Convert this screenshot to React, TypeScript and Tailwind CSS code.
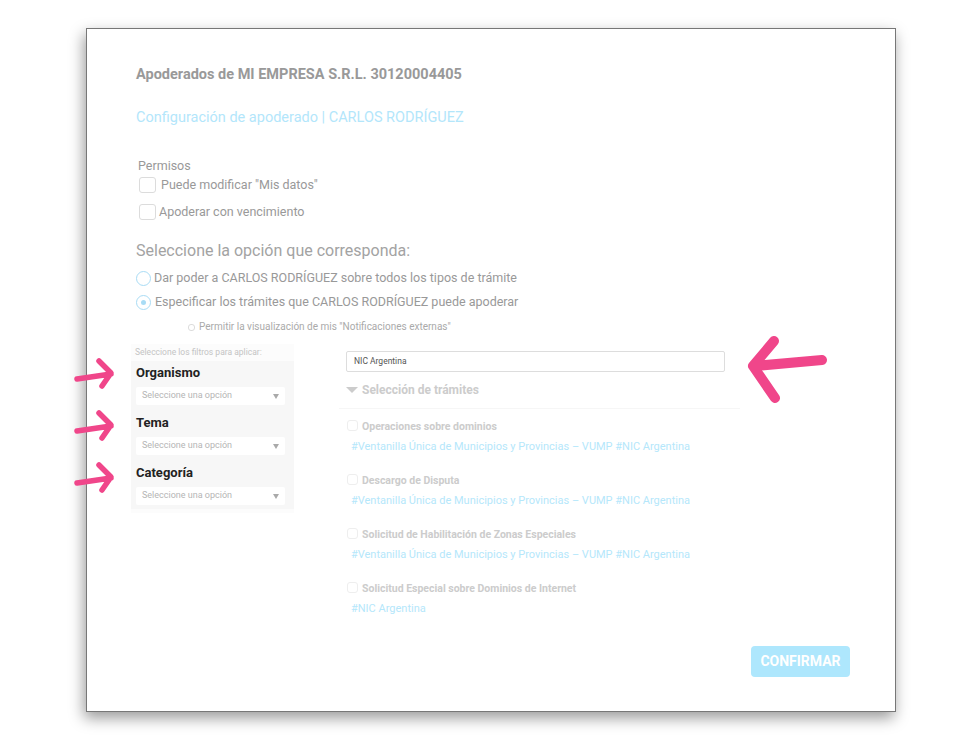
const font = "font-['Roboto',sans-serif]";

const filters = ["Organismo", "Tema", "Categoría"];

const tramites = [
  { title: "Operaciones sobre dominios", tags: "#Ventanilla Única de Municipios y Provincias – VUMP #NIC Argentina" },
  { title: "Descargo de Disputa", tags: "#Ventanilla Única de Municipios y Provincias – VUMP #NIC Argentina" },
  { title: "Solicitud de Habilitación de Zonas Especiales", tags: "#Ventanilla Única de Municipios y Provincias – VUMP #NIC Argentina" },
  { title: "Solicitud Especial sobre Dominios de Internet", tags: "#NIC Argentina" },
];

function SmallArrow({ top }: { top: string }) {
  return (
    <svg className={`absolute left-[-58px] ${top} w-[42px] h-[34px]`} viewBox="0 0 42 34" fill="none">
      <path d="M4 23 L38 18 M26 5 L38 17 L29 30" stroke="#f0468a" strokeWidth="5.5" strokeLinecap="round" strokeLinejoin="round" />
    </svg>
  );
}

function Box({ className }: { className: string }) {
  return <span className={`block shrink-0 rounded-[3px] border border-[#dcdcdc] bg-white ${className}`} />;
}

export default function App() {
  return (
    <div className={`w-[980px] h-[743px] bg-white pl-[86px] pt-[28px] overflow-hidden ${font}`}>
      <div className="relative w-[810px] h-[684px] border border-[#777] bg-white pl-[49px] pt-[37px] shadow-[-2px_6px_14px_rgba(0,0,0,0.4)]">
        <h1 className="text-[14.5px] leading-[18px] font-bold text-[#999]">Apoderados de MI EMPRESA S.R.L. 30120004405</h1>
        <h2 className="mt-[25px] text-[14.5px] leading-[18px] text-[#b3e6fb]">Configuración de apoderado | CARLOS RODRÍGUEZ</h2>

        <p className="mt-[31px] ml-[2px] text-[12.5px] leading-[16px] text-[#999]">Permisos</p>
        <label className="mt-[3px] ml-[3px] flex items-center gap-[5px] text-[12.5px] leading-[16px] text-[#999]">
          <Box className="w-[17px] h-[16px]" />
          Puede modificar "Mis datos"
        </label>
        <label className="mt-[11px] ml-[3px] flex items-center gap-[3px] text-[12.5px] leading-[16px] text-[#999]">
          <Box className="w-[17px] h-[16px]" />
          Apoderar con vencimiento
        </label>

        <p className="mt-[21px] text-[16px] leading-[20px] text-[#a3a3a3]">Seleccione la opción que corresponda:</p>
        <label className="mt-[9px] flex items-center gap-[3px] text-[12.5px] leading-[16px] text-[#999]">
          <span className="block w-[15px] h-[15px] rounded-full border border-[#a9dcf5]" />
          Dar poder a CARLOS RODRÍGUEZ sobre todos los tipos de trámite
        </label>
        <label className="mt-[8px] flex items-center gap-[4px] text-[12.5px] leading-[16px] text-[#999]">
          <span className="flex items-center justify-center w-[15px] h-[15px] rounded-full border border-[#a9dcf5]">
            <span className="block w-[5px] h-[5px] rounded-full bg-[#a9dcf5]" />
          </span>
          Especificar los trámites que CARLOS RODRÍGUEZ puede apoderar
        </label>
        <label className="mt-[11px] ml-[52px] flex items-center gap-[4px] text-[10px] leading-[12px] text-[#aaa]">
          <Box className="w-[7px] h-[7px] rounded-[1px]" />
          Permitir la visualización de mis "Notificaciones externas"
        </label>

        <div className="mt-[11px] flex items-start">
          <div className="relative ml-[-5px] w-[163px] bg-[#fcfcfc] pb-[4px]">
            <p className="h-[17px] pl-[4px] text-[8.5px] leading-[17px] text-[#c4c4c4]">Seleccione los filtros para aplicar:</p>
            <div className="bg-[#f7f7f7] px-[5px] pb-[4px]">
              {filters.map((name, i) => (
                <div key={name} className={i > 0 ? "mt-[6px]" : ""}>
                  <p className="text-[13px] leading-[23px] font-bold text-[#222]">{name}</p>
                  <div className="mt-[3px] flex h-[18px] w-[149px] items-center justify-between rounded-[2px] bg-white px-[6px] text-[9px] text-[#b5b5b5]">
                    Seleccione una opción
                    <span className="h-0 w-0 border-x-[3px] border-t-[5px] border-x-transparent border-t-[#aaa]" />
                  </div>
                </div>
              ))}
            </div>
            <SmallArrow top="top-[12px]" />
            <SmallArrow top="top-[64px]" />
            <SmallArrow top="top-[116px]" />
          </div>

          <div className="ml-[45px] w-[401px]">
            <div className="ml-[7px] mt-[7px] flex h-[21px] w-[379px] items-center rounded-[2px] border border-[#ddd] px-[7px] text-[8.5px] text-[#555]">NIC Argentina</div>
            <div className="ml-[7px] mt-[11px] flex items-center gap-[4px]">
              <span className="h-0 w-0 border-x-[6px] border-t-[6px] border-x-transparent border-t-[#ccc]" />
              <span className="text-[12px] leading-[14px] font-bold text-[#ccc]">Selección de trámites</span>
            </div>
            <div className="mt-[11px] border-t border-[#f6f6f6] pl-[8px]">
              {tramites.map((t) => (
                <div key={t.title} className="mt-[11px] mb-[15px] h-[39px]">
                  <div className="flex items-center gap-[4px]">
                    <Box className="w-[11px] h-[11px] mt-[-3px] border-[#eee]" />
                    <span className="text-[10.5px] leading-[14px] font-bold text-[#ccc]">{t.title}</span>
                  </div>
                  <p className="mt-[6px] ml-[4px] text-[11px] leading-[14px] text-[#b5e7fb]">{t.tags}</p>
                </div>
              ))}
            </div>
          </div>
        </div>

        <button className="absolute left-[664px] top-[617px] h-[31px] w-[99px] rounded-[4px] bg-[#aee7fd] text-[14px] font-bold text-white">CONFIRMAR</button>

        <svg className="absolute left-[656px] top-[304px] w-[86px] h-[76px]" viewBox="0 0 86 76" fill="none">
          <path d="M79 27 L12 33 M31 8 L10 33 L32 65" stroke="#f0468a" strokeWidth="10" strokeLinecap="round" strokeLinejoin="round" />
        </svg>
      </div>
    </div>
  );
}
